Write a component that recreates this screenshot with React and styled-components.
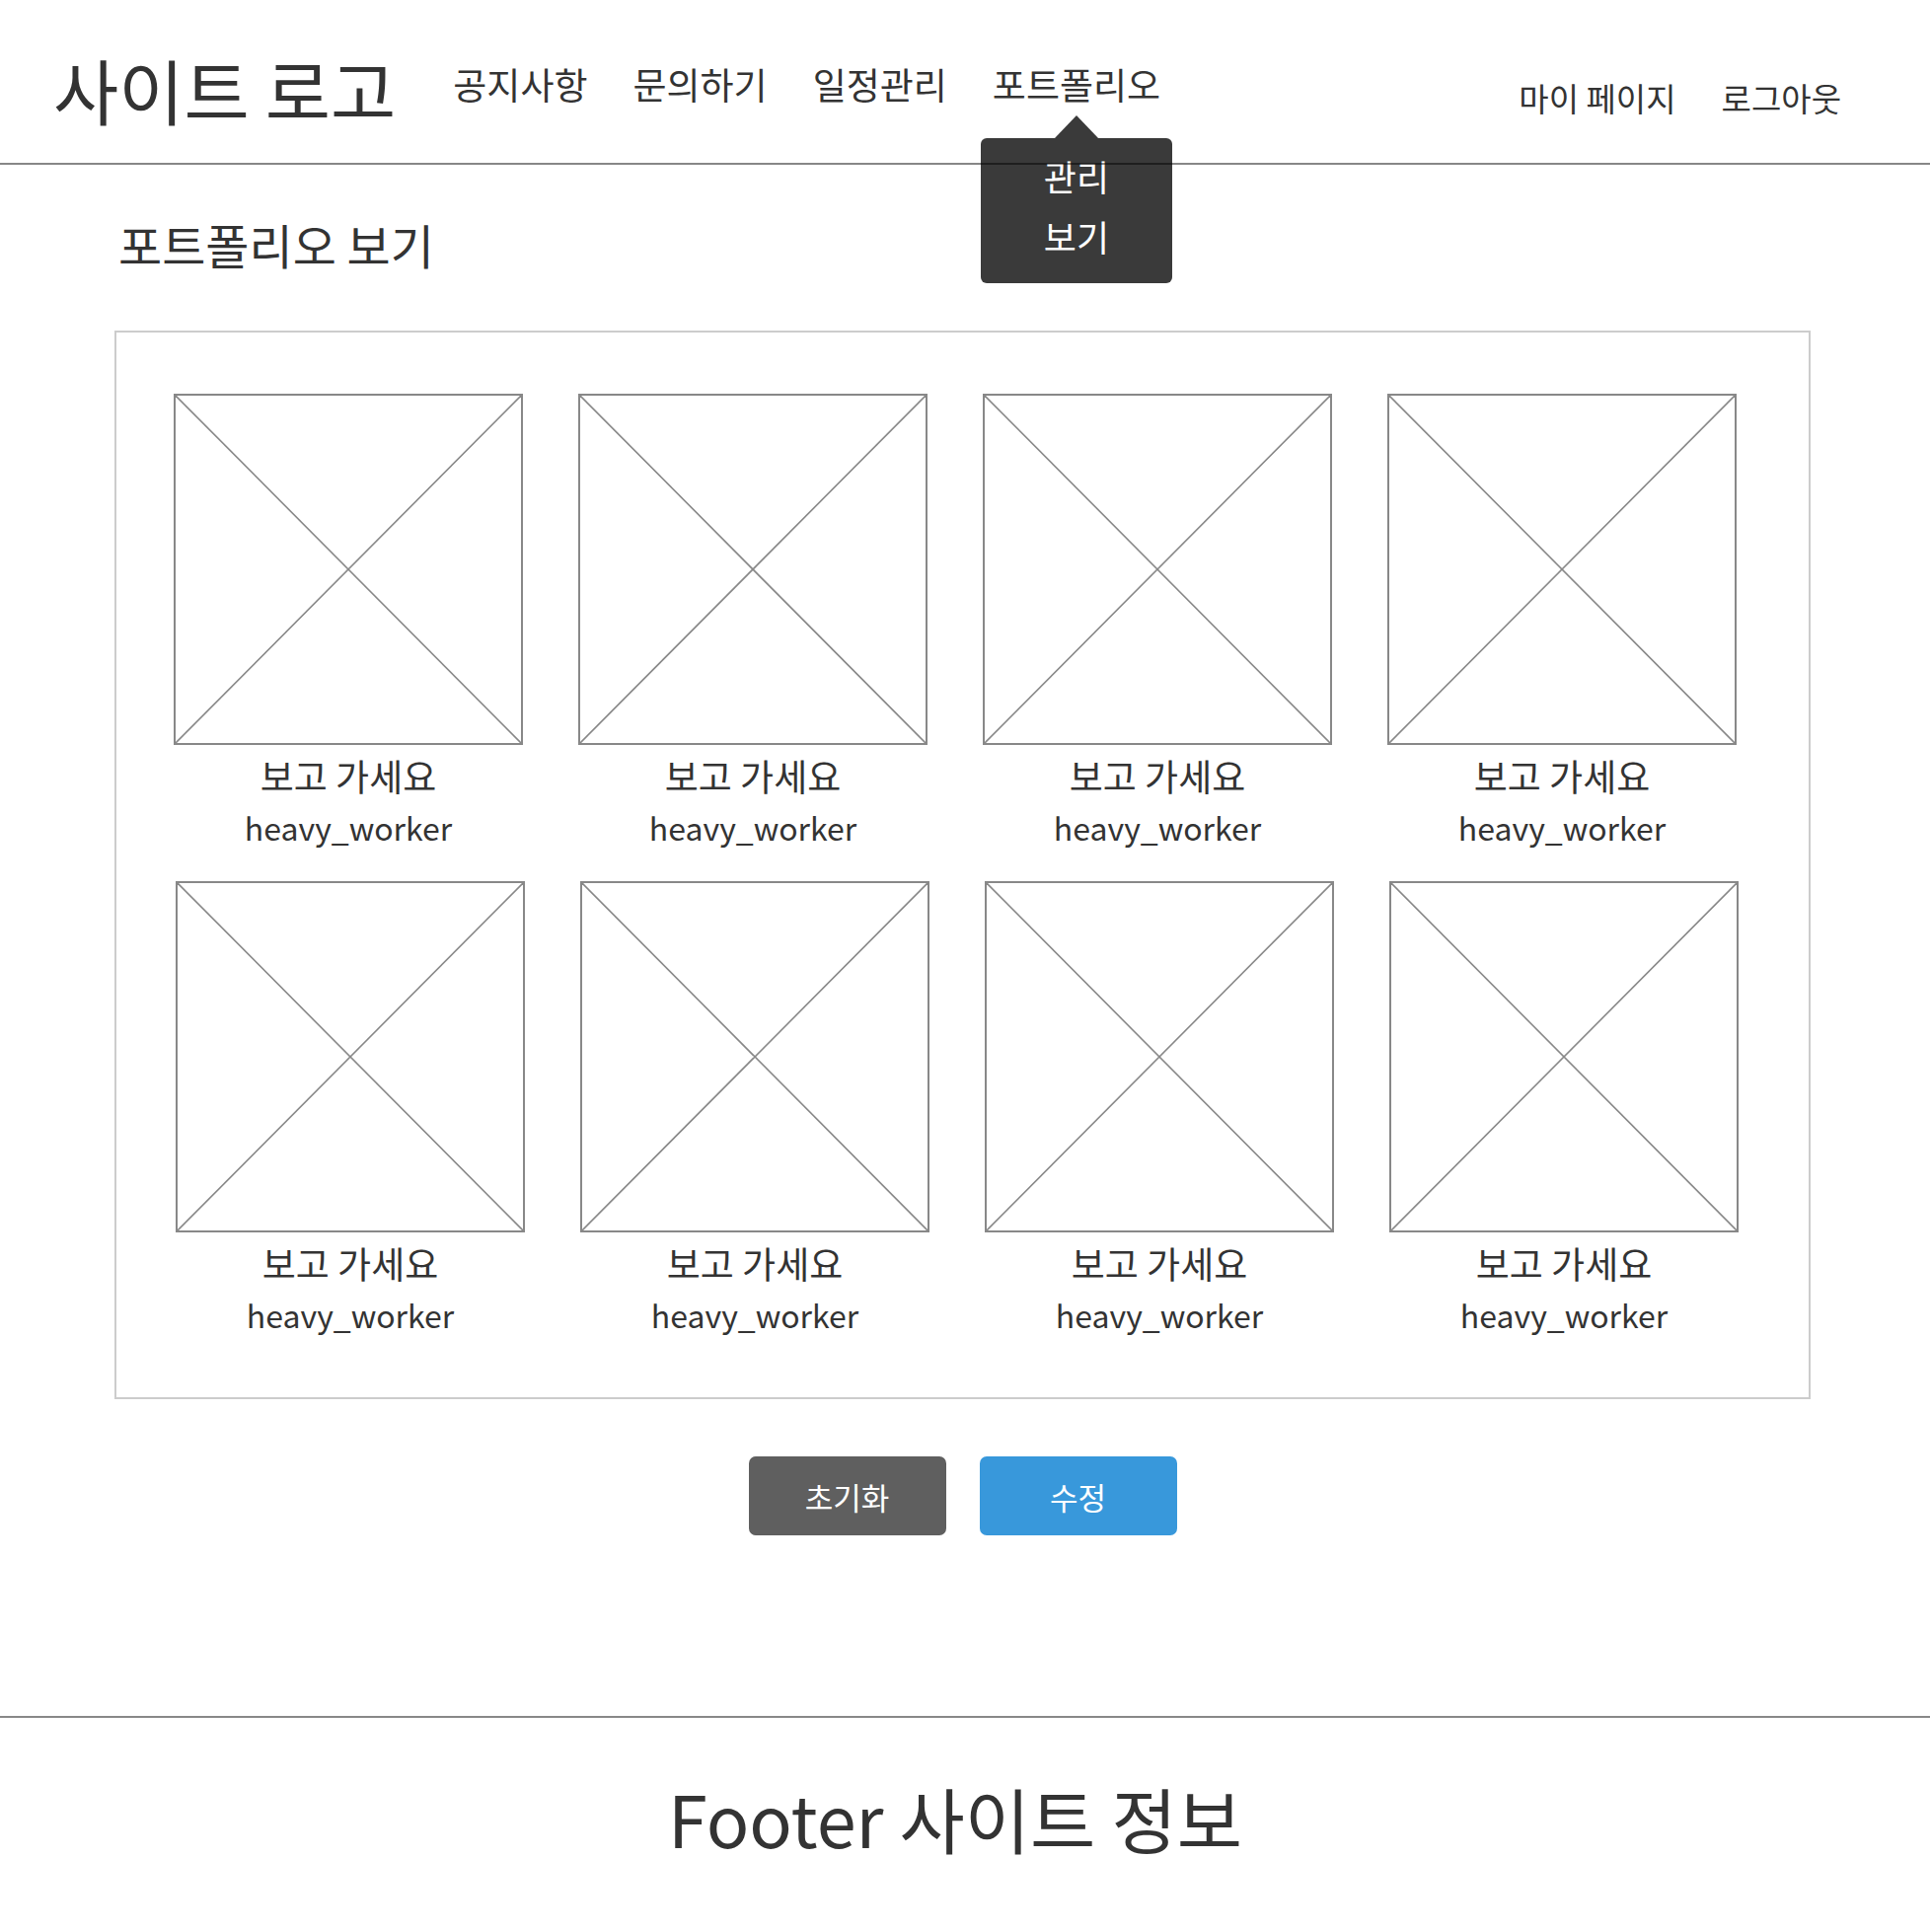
import React from 'react'
import styled, { createGlobalStyle } from 'styled-components'

const GlobalStyle = createGlobalStyle`
  html, body {
    margin: 0;
    padding: 0;
    background: #ffffff;
  }
  body {
    font-family: "Noto Sans CJK KR", "Noto Sans", sans-serif;
    color: #333333;
  }
`;

const Page = styled.div`
  width: 1956px;
  min-height: 1958px;
  display: flex;
  flex-direction: column;
`;

const Header = styled.header`
  position: relative;
  display: flex;
  align-items: flex-start;
  height: 167px;
  box-sizing: border-box;
  padding: 0 90px 0 54px;

  /* the rule sits over the open dropdown, so it is drawn as a layer */
  &::after {
    content: '';
    position: absolute;
    left: 0;
    right: 0;
    bottom: 0;
    height: 2px;
    background: rgba(0, 0, 0, 0.47);
    z-index: 3;
  }
`;

const Logo = styled.h1`
  margin: 54px 58px 0 0;
  font-size: 72px;
  font-weight: 400;
  line-height: 1;
  white-space: nowrap;
`;

const Nav = styled.nav`
  display: flex;
  gap: 46px;
  margin-top: 67px;
`;

const NavItem = styled.div`
  position: relative;
  font-size: 37px;
  line-height: 1;
  white-space: nowrap;
`;

const Dropdown = styled.div`
  position: absolute;
  top: calc(100% + 36px);
  left: 50%;
  transform: translateX(-50%);
  width: 194px;
  padding: 8px 0 17px;
  background: #3a3a3a;
  border-radius: 6px;
  color: #ffffff;
  text-align: center;
  z-index: 2;

  &::before {
    content: '';
    position: absolute;
    top: -23px;
    left: 50%;
    transform: translateX(-50%);
    border-left: 23px solid transparent;
    border-right: 23px solid transparent;
    border-bottom: 24px solid #3a3a3a;
  }
`;

const DropItem = styled.div`
  font-size: 36px;
  line-height: 61px;
`;

const UserMenu = styled.div`
  display: flex;
  gap: 46px;
  margin: 83px 0 0 auto;
  font-size: 33px;
  line-height: 1;
`;

const Main = styled.main`
  flex: 1;
  padding: 0 121px 0 116px;
`;

const Title = styled.h2`
  margin: 56px 0 64px 4px;
  font-size: 48px;
  font-weight: 400;
  line-height: 1;
`;

const Board = styled.section`
  border: 2px solid #cccccc;
  padding: 62px 58px 58px;
  display: flex;
  flex-direction: column;
  gap: 29px;
`;

const Row = styled.div`
  display: grid;
  grid-template-columns: repeat(4, 354px);
  column-gap: 56px;
  padding-left: ${(props) => props.shift || 0}px;
`;

const Card = styled.div`
  display: flex;
  flex-direction: column;
  align-items: center;
`;

const Thumb = styled.div`
  width: 354px;
  height: 356px;
  box-sizing: border-box;
  border: 2px solid #888888;

  svg {
    display: block;
    width: 100%;
    height: 100%;
  }
`;

const CardTitle = styled.div`
  margin-top: 5px;
  font-size: 37px;
  line-height: 52px;
`;

const CardUser = styled.div`
  font-size: 32px;
  line-height: 52px;
`;

const Actions = styled.div`
  display: flex;
  justify-content: center;
  gap: 34px;
  margin-top: 58px;
`;

const Button = styled.button`
  width: 200px;
  height: 80px;
  border: none;
  border-radius: 7px;
  background: ${(props) => props.bg};
  color: #ffffff;
  font-family: inherit;
  font-size: 31px;
`;

const Footer = styled.footer`
  margin-top: 170px;
  height: 219px;
  box-sizing: border-box;
  padding: 0 20px 16px 0;
  border-top: 2px solid #888888;
  display: flex;
  align-items: center;
  justify-content: center;
  font-size: 72px;
`;

const rows = [
  { id: 'a', shift: 0 },
  { id: 'b', shift: 2 },
];

const Placeholder = () => (
  <Thumb>
    <svg viewBox="0 0 100 100" preserveAspectRatio="none">
      <line x1="0" y1="0" x2="100" y2="100" stroke="#888" strokeWidth="1.6" vectorEffect="non-scaling-stroke" />
      <line x1="100" y1="0" x2="0" y2="100" stroke="#888" strokeWidth="1.6" vectorEffect="non-scaling-stroke" />
    </svg>
  </Thumb>
);

const App = () => {
  return (
    <Page>
      <GlobalStyle />
      <Header>
        <Logo>사이트 로고</Logo>
        <Nav>
          <NavItem>공지사항</NavItem>
          <NavItem>문의하기</NavItem>
          <NavItem>일정관리</NavItem>
          <NavItem>
            포트폴리오
            <Dropdown>
              <DropItem>관리</DropItem>
              <DropItem>보기</DropItem>
            </Dropdown>
          </NavItem>
        </Nav>
        <UserMenu>
          <span>마이 페이지</span>
          <span>로그아웃</span>
        </UserMenu>
      </Header>

      <Main>
        <Title>포트폴리오 보기</Title>
        <Board>
          {rows.map((row) => (
            <Row key={row.id} shift={row.shift}>
              {[0, 1, 2, 3].map((i) => (
                <Card key={i}>
                  <Placeholder />
                  <CardTitle>보고 가세요</CardTitle>
                  <CardUser>heavy_worker</CardUser>
                </Card>
              ))}
            </Row>
          ))}
        </Board>
        <Actions>
          <Button bg="#5f5f5f">초기화</Button>
          <Button bg="#3898db">수정</Button>
        </Actions>
      </Main>

      <Footer>Footer 사이트 정보</Footer>
    </Page>
  )
}

export default App
